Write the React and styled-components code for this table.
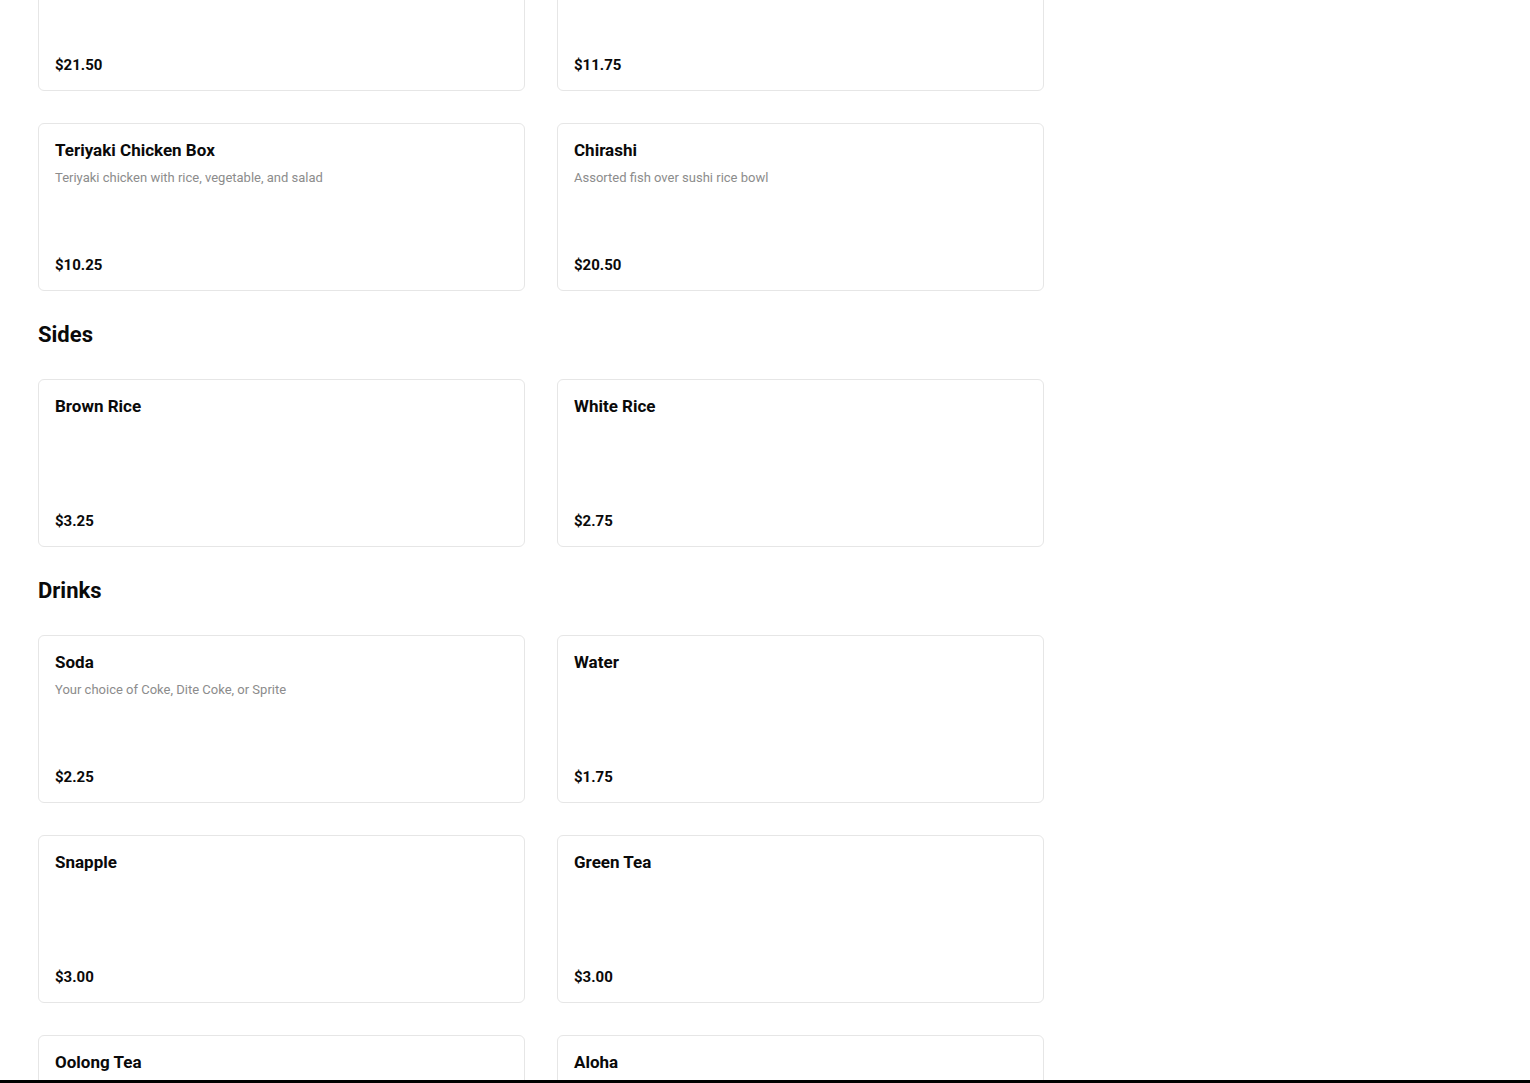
import React from "react";
import styled, { createGlobalStyle } from "styled-components";

const Global = createGlobalStyle`
    body {
        margin: 0;
        background: #fff;
        font-family: Roboto, "Liberation Sans", Arial, sans-serif;
        color: #0a0a0a;
        overflow: hidden;
    }
`;

const Page = styled.main`
    width: 1006px;
    padding: 0 38px;
    margin-top: -77px;
`;

const SectionTitle = styled.h2`
    margin: 0;
    padding: 30px 0 30px;
    font-size: 22px;
    line-height: 28px;
    font-weight: 700;
    color: #0a0a0a;
`;

const Grid = styled.div`
    display: grid;
    grid-template-columns: 1fr 1fr;
    gap: 32px;
`;

const Card = styled.div`
    box-sizing: border-box;
    min-height: 168px;
    padding: 16px;
    border: 1px solid #e6e6e6;
    border-radius: 6px;
    display: flex;
    flex-direction: column;
    background: #fff;
`;

const Name = styled.div`
    font-size: 17px;
    line-height: 20px;
    font-weight: 700;
    color: #0a0a0a;
`;

const Desc = styled.div`
    margin-top: 10px;
    font-size: 13px;
    line-height: 16px;
    color: #8c8c8c;
`;

const Price = styled.div`
    margin-top: auto;
    font-size: 15px;
    line-height: 18px;
    font-weight: 700;
    color: #0a0a0a;
`;

const BottomBar = styled.div`
    position: fixed;
    left: 0;
    right: 0;
    bottom: 0;
    height: 3px;
    background: #000;
`;

const menu = [
    {
        title: null,
        items: [
            { name: "Sushi Deluxe", desc: "Chef's choice of sushi and roll", price: "$21.50" },
            { name: "Sashimi Lunch", desc: "Assorted sashimi with rice", price: "$11.75" },
            { name: "Teriyaki Chicken Box", desc: "Teriyaki chicken with rice, vegetable, and salad", price: "$10.25" },
            { name: "Chirashi", desc: "Assorted fish over sushi rice bowl", price: "$20.50" },
        ],
    },
    {
        title: "Sides",
        items: [
            { name: "Brown Rice", price: "$3.25" },
            { name: "White Rice", price: "$2.75" },
        ],
    },
    {
        title: "Drinks",
        items: [
            { name: "Soda", desc: "Your choice of Coke, Dite Coke, or Sprite", price: "$2.25" },
            { name: "Water", price: "$1.75" },
            { name: "Snapple", price: "$3.00" },
            { name: "Green Tea", price: "$3.00" },
            { name: "Oolong Tea", price: "$3.00" },
            { name: "Aloha", price: "$3.50" },
        ],
    },
];

export default function App() {
    return (
        <>
            <Global />
            <Page>
                {menu.map((section, i) => (
                    <section key={i}>
                        {section.title && <SectionTitle>{section.title}</SectionTitle>}
                        <Grid>
                            {section.items.map((item) => (
                                <Card key={item.name}>
                                    <Name>{item.name}</Name>
                                    {item.desc && <Desc>{item.desc}</Desc>}
                                    <Price>{item.price}</Price>
                                </Card>
                            ))}
                        </Grid>
                    </section>
                ))}
            </Page>
            <BottomBar />
        </>
    );
}
